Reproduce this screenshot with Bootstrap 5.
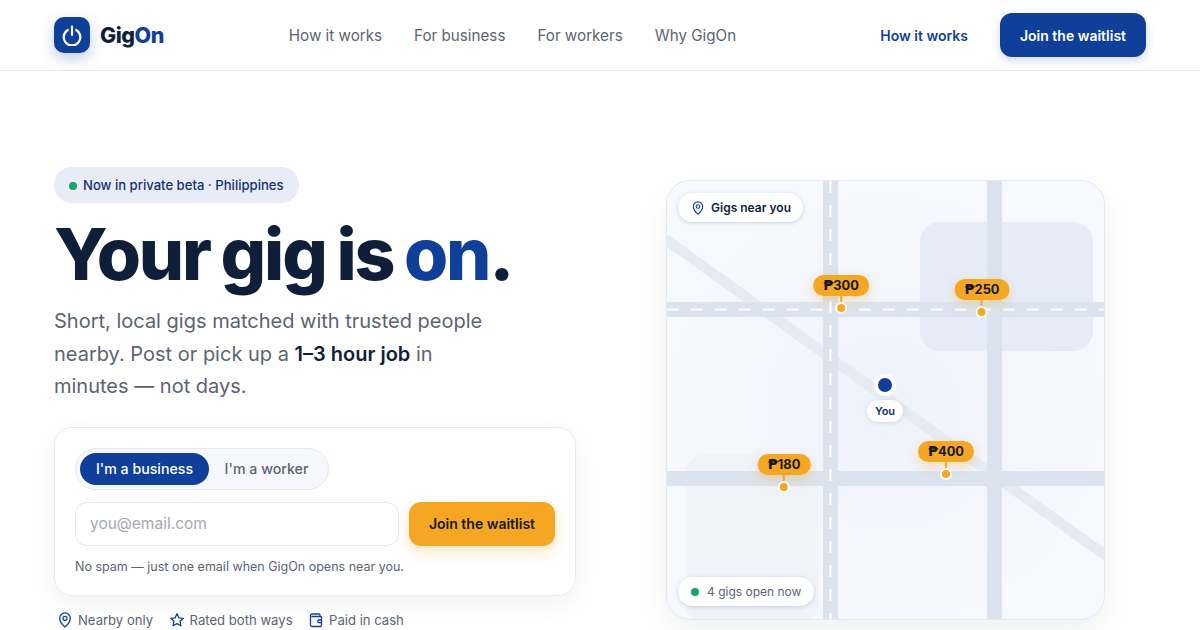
<!DOCTYPE html>
<html lang="en">
<head>
    <meta charset="UTF-8">
    <meta name="viewport" content="width=device-width, initial-scale=1.0">
    <title>GigOn</title>
    <link href="https://cdn.jsdelivr.net/npm/bootstrap@5.3.0/dist/css/bootstrap.min.css" rel="stylesheet">
    <style>
        body { font-family: Inter, "Liberation Sans", sans-serif; color: #0f1f3a; background: #fff; overflow: hidden; }
        .page-wrap { width: 1092px; margin: 0 auto; }
        .top-bar { height: 71px; border-bottom: 1px solid #e7e9ed; }
        .logo-box { width: 36px; height: 36px; border-radius: 10px; background: #0f3f99; box-shadow: 0 6px 14px rgba(15,63,153,.25); }
        .logo-text { font-weight: 800; font-size: 21.500px; letter-spacing: -.5px; color: #0f1f3a; margin-left: 2px; }
        .blue-text { color: #0f3f99; }
        .top-links { gap: 32px; margin-left: 125px; padding-top: 2px; }
        .top-links a { color: #5b6472; font-size: 15.2px; text-decoration: none; }
        .top-how { color: #0f3f99; font-size: 14px; font-weight: 600; text-decoration: none; }
        .top-join { background: #0f3f99; color: #fff; font-size: 14px; font-weight: 600; border-radius: 12px; width: 146px; height: 44px; padding: 0; border: 0; margin-left: 32px; box-shadow: 0 4px 10px rgba(15,63,153,.18); }
        .hero-wrap { padding-top: 96px; }
        .left-col { width: 522px; }
        .beta-pill { background: #e7ecf7; color: #12336e; height: 36px; padding: 1px 15px 0; border-radius: 18px; font-size: 13.1px; font-weight: 500; gap: 6px; }
        .green-dot { width: 8px; height: 8px; border-radius: 50%; background: #16a760; }
        .hero-title { font-size: 71.500px; font-weight: 800; letter-spacing: -2.2px; word-spacing: -2.7px; line-height: 80px; margin: 11px 0 11px; color: #0f1f3a; }
        .hero-text { font-size: 20px; line-height: 32.5px; color: #5b6472; width: 450px; margin-bottom: 24px; }
        .hero-text b { color: #0f1f3a; font-weight: 600; }
        .form-panel { height: 169px; border: 1px solid #e7e9ed; border-radius: 18px; padding: 20px; box-shadow: 0 8px 24px rgba(15,31,58,.06); }
        .role-toggle { width: 254px; height: 42px; border: 1px solid #e4e8f0; border-radius: 21px; background: #f6f8fd; padding: 4px; margin-bottom: 12px; }
        .role-on { width: 129px; height: 32px; background: #0f3f99; color: #fff; font-size: 14.2px; font-weight: 500; border-radius: 16px; border: 0; }
        .role-off { width: 115px; height: 32px; background: transparent; color: #5b6472; font-size: 14.2px; font-weight: 500; border: 0; }
        .mail-box { width: 324px; height: 44px; border: 1px solid #e4e8f0; border-radius: 12px; font-size: 15.5px; padding: 0 14px; box-shadow: none; }
        .mail-box::placeholder { color: #a3a8b0; }
        .join-amber { width: 146px; height: 44px; background: #f5a623; color: #14181f; border: 0; border-radius: 12px; font-size: 14px; font-weight: 600; box-shadow: 0 6px 14px rgba(245,166,35,.28); }
        .fine-print { font-size: 12.5px; color: #5b6472; margin-top: 12px; }
        .perk-row { gap: 15.5px; margin-top: 15px; margin-left: 3px; font-size: 13.1px; color: #5b6472; }
        .perk-row span { gap: 5px; }
        .map-col { width: 439px; margin: 13px 41px 0 0; }
        .map-panel { width: 439px; height: 440px; border: 1px solid #e4e8f0; border-radius: 24px; overflow: hidden; background: radial-gradient(circle at 50% 52%, #eef2fb 0, #f6f9ff 70%); box-shadow: 0 14px 30px rgba(15,31,58,.06); }
        .map-outer { position: relative; width: 439px; height: 440px; }
        .map-chip { position: absolute; left: 12px; height: 29px; background: #fff; border-radius: 15px; font-size: 12px; padding: 0 13px; box-shadow: 0 1px 4px rgba(15,31,58,.18); }
        .chip-top { top: 13px; gap: 6px; padding-right: 12px; }
        .chip-bottom { top: 397px; gap: 8px; color: #5b6472; }
        .gig-pin { position: absolute; transform: translateX(-50%); display: flex; flex-direction: column; align-items: center; }
        .pin-label { height: 21px; background: #f5a623; border-radius: 11px; padding: 0 10px; font-size: 12.8px; line-height: 21px; font-weight: 700; color: #14181f; box-shadow: 0 4px 12px rgba(245,166,35,.35); white-space: nowrap; }
        .peso-sign { font-family: "DejaVu Sans", sans-serif; font-size: 14.5px; line-height: 1; }
        .pin-stem { width: 2px; height: 7px; background: #f5a623; }
        .pin-dot { width: 12px; height: 12px; margin-top: -1px; border-radius: 50%; background: #f5a623; border: 2px solid #fff; }
        .you-dot { position: absolute; left: 208px; top: 194px; width: 22px; height: 22px; border-radius: 50%; background: #0f3f99; border: 4px solid #fff; }
        .you-tag { position: absolute; left: 201px; top: 220px; width: 36px; height: 22px; background: #fff; border-radius: 11px; font-size: 11px; font-weight: 600; color: #12336e; box-shadow: 0 1px 4px rgba(15,31,58,.12); }
    </style>
</head>
<body>
    <header class="top-bar">
        <div class="page-wrap h-100 d-flex align-items-center">
            <a href="#" class="d-flex align-items-center gap-2 text-decoration-none">
                <span class="logo-box d-flex align-items-center justify-content-center">
                    <svg width="22" height="22" viewBox="0 0 22 22" fill="none" stroke="#fff" stroke-width="2.200" stroke-linecap="round"><path d="M6.800 6a8.300 8.300 0 1 0 8.400 0"/><path d="M11 2.500v8.500"/></svg>
                </span>
                <span class="logo-text">Gig<span class="blue-text">On</span></span>
            </a>
            <nav class="top-links d-flex">
                <a href="#">How it works</a>
                <a href="#">For business</a>
                <a href="#">For workers</a>
                <a href="#">Why GigOn</a>
            </nav>
            <div class="ms-auto d-flex align-items-center">
                <a href="#" class="top-how">How it works</a>
                <button class="btn top-join">Join the waitlist</button>
            </div>
        </div>
    </header>

    <main class="page-wrap hero-wrap d-flex justify-content-between align-items-start">
        <section class="left-col">
            <div class="beta-pill d-inline-flex align-items-center"><span class="green-dot"></span>Now in private beta · Philippines</div>
            <h1 class="hero-title">Your gig is <span class="blue-text">on</span>.</h1>
            <p class="hero-text">Short, local gigs matched with trusted people nearby. Post or pick up a <b>1–3 hour job</b> in minutes — not days.</p>
            <div class="form-panel">
                <div class="role-toggle d-flex">
                    <button class="btn p-0 role-on">I'm a business</button>
                    <button class="btn p-0 role-off">I'm a worker</button>
                </div>
                <div class="d-flex gap-2 justify-content-between">
                    <input class="form-control mail-box" type="email" placeholder="you@email.com">
                    <button class="btn p-0 join-amber">Join the waitlist</button>
                </div>
                <div class="fine-print">No spam — just one email when GigOn opens near you.</div>
            </div>
            <div class="perk-row d-flex">
                <span class="d-flex align-items-center">
                    <svg width="16" height="16" viewBox="1.500 0.500 13 15" fill="none" stroke="#0f3f99" stroke-width="1.200"><path d="M8 14.600S3 10.400 3 6.400a5 5 0 0 1 10 0c0 4-5 8.200-5 8.200z"/><circle cx="8" cy="6.400" r="1.900"/></svg>
                    Nearby only</span>
                <span class="d-flex align-items-center">
                    <svg width="16" height="16" viewBox="0 0 16 16" fill="none" stroke="#0f3f99" stroke-width="1.300" stroke-linejoin="round"><path d="M8 1.800l1.900 4 4.400.5-3.200 3 .8 4.400L8 11.600l-3.900 2.100.8-4.400-3.200-3 4.400-.5z"/></svg>
                    Rated both ways</span>
                <span class="d-flex align-items-center">
                    <svg width="16" height="16" viewBox="0 0 16 16" fill="none" stroke="#0f3f99" stroke-width="1.300" stroke-linejoin="round"><path d="M12 4.500V3a1 1 0 0 0-1-1H4a1.500 1.500 0 0 0-1.500 1.500V13A1.500 1.500 0 0 0 4 14.500h8.500a1 1 0 0 0 1-1V5.500a1 1 0 0 0-1-1H3.500"/><path d="M13.500 8H11a1.300 1.300 0 0 0 0 2.700h2.500"/></svg>
                    Paid in cash</span>
            </div>
        </section>

        <section class="map-col">
            <div class="map-outer">
                <div class="map-panel">
                    <svg width="437" height="438" viewBox="0 0 437 438" class="d-block">
                        <rect x="253" y="41" width="173" height="129" rx="20" fill="#e6ecf7"/>
                        <rect x="19" y="273" width="132" height="170" rx="20" fill="#eff3fa"/>
                        <path d="M-2 58L442 377" stroke="#e6ebf3" stroke-width="10.500"/>
                        <rect x="156" y="0" width="15" height="440" fill="#dbe3ee"/>
                        <rect x="320" y="0" width="15" height="440" fill="#dbe3ee"/>
                        <rect x="0" y="121" width="440" height="15" fill="#dbe3ee"/>
                        <rect x="0" y="290" width="440" height="15" fill="#dbe3ee"/>
                        <path d="M163.500 0V440" stroke="#fff" stroke-width="2" stroke-dasharray="12 12"/>
                        <path d="M0 128.500H440" stroke="#fff" stroke-width="2" stroke-dasharray="12 12"/>
                    </svg>
                </div>
                <div class="map-chip chip-top d-flex align-items-center">
                    <svg width="14" height="14" viewBox="1.500 0.500 13 15" fill="none" stroke="#0f3f99" stroke-width="1.200"><path d="M8 14.600S3 10.400 3 6.400a5 5 0 0 1 10 0c0 4-5 8.200-5 8.200z"/><circle cx="8" cy="6.400" r="1.900"/></svg>
                    <span class="fw-semibold">Gigs near you</span>
                </div>
                <div class="gig-pin" style="left: 175px; top: 95px"><span class="pin-label"><span class="peso-sign">₱</span>300</span><span class="pin-stem"></span><span class="pin-dot"></span></div>
                <div class="gig-pin" style="left: 316px; top: 99px"><span class="pin-label"><span class="peso-sign">₱</span>250</span><span class="pin-stem"></span><span class="pin-dot"></span></div>
                <div class="gig-pin" style="left: 118px; top: 274px"><span class="pin-label"><span class="peso-sign">₱</span>180</span><span class="pin-stem"></span><span class="pin-dot"></span></div>
                <div class="gig-pin" style="left: 280px; top: 261px"><span class="pin-label"><span class="peso-sign">₱</span>400</span><span class="pin-stem"></span><span class="pin-dot"></span></div>
                <span class="you-dot"></span>
                <span class="you-tag d-flex align-items-center justify-content-center">You</span>
                <div class="map-chip chip-bottom d-flex align-items-center">
                    <span class="green-dot"></span>
                    <span>4 gigs open now</span>
                </div>
            </div>
        </section>
    </main>
    <script src="https://cdn.jsdelivr.net/npm/bootstrap@5.3.0/dist/js/bootstrap.bundle.min.js"></script>
</body>
</html>
